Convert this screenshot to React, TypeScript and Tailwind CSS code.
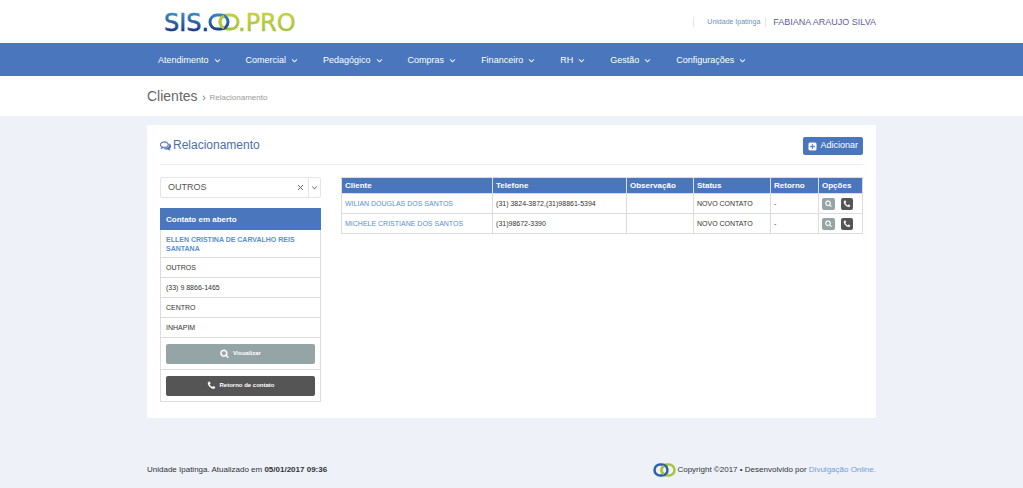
import React, { useState } from 'react';

const ICONS = {
  angleDown: 'M1395 736q0 13-10 23l-466 466q-10 10-23 10t-23-10l-466-466q-10-10-10-23t10-23l50-50q10-10 23-10t23 10l393 393 393-393q10-10 23-10t23 10l50 50q10 10 10 23z',
  phone: 'M1600 1240q0 27-10 70.5t-21 68.5q-21 50-122 106-94 51-186 51-27 0-53-3.5t-57.5-12.5-47-14.5-55.5-20.5-49-18q-98-35-175-83-127-79-264-216t-216-264q-48-77-83-175-3-9-18-49t-20.5-55.5-14.5-47-12.5-57.5-3.5-53q0-92 51-186 56-101 106-122 25-11 68.5-21t70.5-10q14 0 21 3 18 6 53 76 11 19 30 54t35 63.5 31 53.5q3 4 17.5 25t21.5 35.5 7 28.5q0 20-28.5 50t-62 55-62 53-28.5 46q0 9 5 22.5t8.5 20.5 14 24 11.5 19q76 137 174 235t235 174q2 1 19 11.5t24 14 20.5 8.5 22.5 5q18 0 46-28.5t53-62 55-62 50-28.5q14 0 28.5 7t35.5 21.5 25 17.5q25 15 53.5 31t63.5 35 54 30q70 35 76 53 3 7 3 21z',
  search: 'M1216 832q0-185-131.5-316.5t-316.5-131.5-316.5 131.5-131.5 316.5 131.5 316.5 316.5 131.5 316.5-131.5 131.5-316.5zm512 832q0 52-38 90t-90 38q-54 0-90-38l-343-342q-179 124-399 124-143 0-273.5-55.5t-225-150-150-225-55.5-273.5 55.5-273.5 150-225 225-150 273.5-55.5 273.5 55.5 225 150 150 225 55.5 273.5q0 220-124 399l343 343q37 37 37 90z',
  plusSquare: 'M1408 960v-128q0-26-19-45t-45-19h-320v-320q0-26-19-45t-45-19h-128q-26 0-45 19t-19 45v320h-320q-26 0-45 19t-19 45v128q0 26 19 45t45 19h320v320q0 26 19 45t45 19h128q26 0 45-19t19-45v-320h320q26 0 45-19t19-45zm256-544v960q0 119-84.5 203.5t-203.5 84.5h-960q-119 0-203.5-84.5t-84.5-203.5v-960q0-119 84.5-203.5t203.5-84.5h960q119 0 203.5 84.5t84.5 203.5z',
  comments: 'M704 384q-153 0-286 52t-211.5 141-78.5 191q0 82 53 158t149 132l97 56-35 84q34-20 62-39l44-31 53 10q78 14 153 14 153 0 286-52t211.5-141 78.5-191-78.5-191-211.5-141-286-52zm0-128q191 0 353.5 68.5t256.5 186.5 94 257-94 257-256.5 186.5-353.5 68.5q-86 0-176-16-124 88-278 128-36 9-86 16h-3q-11 0-20.5-8t-11.5-21q-1-3-1-6.5t.5-6.5 2-6l2.5-5 3.5-5.5 4-5 4.5-5 4-4.5q5-6 23-25t26-29.5 22.5-29 25-38.5 20.5-44q-124-72-195-177t-71-224q0-139 94-257t256.5-186.5 353.5-68.5zm822 1169q10 24 20.5 44t25 38.5 22.5 29 26 29.5 23 25q1 1 4 4.5t4.5 5 4 5 3.5 5.5l2.5 5 2 6 .5 6.5-1 6.5q-3 14-13 22t-22 7q-50-7-86-16-154-40-278-128-90 16-176 16-271 0-472-132 58 4 88 4 161 0 309-45t264-129q125-92 192-212t67-254q0-77-23-152 129 71 204 178t75 230q0 120-71 224.5t-195 176.5z'
};

const Icon: React.FC<{ name: keyof typeof ICONS; className?: string }> = ({ name, className }) => (
  <svg viewBox="0 0 1792 1792" fill="currentColor" stroke="currentColor" strokeWidth="60" className={className} aria-hidden="true">
    <path d={ICONS[name]} />
  </svg>
);

const MENU = ['Atendimento', 'Comercial', 'Pedagógico', 'Compras', 'Financeiro', 'RH', 'Gestão', 'Configurações'];

const CLIENTS = [
  { name: 'WILIAN DOUGLAS DOS SANTOS', phone: '(31) 3824-3872,(31)98861-5394', note: '', status: 'NOVO CONTATO', back: '-' },
  { name: 'MICHELE CRISTIANE DOS SANTOS', phone: '(31)98672-3390', note: '', status: 'NOVO CONTATO', back: '-' }
];

const COLUMNS = [
  { label: 'Cliente', width: 'w-[29%]' },
  { label: 'Telefone', width: '' },
  { label: 'Observação', width: 'w-[67px]' },
  { label: 'Status', width: 'w-[77px]' },
  { label: 'Retorno', width: 'w-[48px]' },
  { label: 'Opções', width: 'w-[44px]' }
];

const CONTACT = ['OUTROS', '(33) 9 8866-1465', 'CENTRO', 'INHAPIM'];

const Logo: React.FC = () => (
  <svg width="138" height="32" viewBox="0 0 138 32" role="img" aria-label="SIS.OO.PRO" className="overflow-visible">
    <defs>
      <linearGradient id="logoBlue" gradientUnits="userSpaceOnUse" x1="0" y1="7" x2="0" y2="25">
        <stop offset="0" stopColor="#3a8ac8" />
        <stop offset="1" stopColor="#1b3a86" />
      </linearGradient>
      <linearGradient id="logoGreen" gradientUnits="userSpaceOnUse" x1="0" y1="7" x2="0" y2="25">
        <stop offset="0" stopColor="#c6d145" />
        <stop offset="1" stopColor="#a5c33a" />
      </linearGradient>
    </defs>
    <g fontSize="24" fontFamily="'DejaVu Sans', sans-serif" strokeWidth="0.5">
      <text x="0" y="25" fill="url(#logoBlue)" stroke="url(#logoBlue)">SIS.</text>
      <text x="74" y="25" fill="url(#logoGreen)" stroke="url(#logoGreen)">.PRO</text>
    </g>
    <rect x="56" y="9" width="18" height="14" rx="7" fill="none" stroke="url(#logoGreen)" strokeWidth="3" />
    <rect x="46" y="9" width="18" height="14" rx="7" fill="none" stroke="url(#logoBlue)" strokeWidth="3" />
    <path d="M60 10Q56 12 56 16T60 22" fill="none" stroke="#b4c93f" strokeWidth="3" />
  </svg>
);

const Rings: React.FC = () => (
  <svg width="23" height="14" viewBox="0 0 23 14" aria-hidden="true">
    <rect x="8.500" y="1.500" width="13" height="11" rx="5.500" fill="none" stroke="#a9c63b" strokeWidth="2.500" />
    <rect x="1.500" y="1.500" width="13" height="11" rx="5.500" fill="none" stroke="#2d62ab" strokeWidth="2.500" />
    <path d="M11 3Q8.500 4.500 8.500 7T11 11" fill="none" stroke="#a9c63b" strokeWidth="2.500" />
  </svg>
);

const App: React.FC = () => {
  const [kind, setKind] = useState('OUTROS');

  return (
    <div className="min-h-screen bg-[#eef1f8] font-['Liberation_Sans',Arial,sans-serif] text-[#333333]">
      {/* Top bar */}
      <header className="bg-white">
        <div className="mx-auto flex h-[43px] w-full max-w-[729px] items-center justify-between pl-[17px]">
          <Logo />
          <div className="flex items-center leading-[10px]">
            <a href="#unidade" className="border-x border-[#e3e6ec] pl-[13px] pr-[5px] text-[7px] text-[#6a8fc8]">Unidade Ipatinga</a>
            <a href="#usuario" className="pl-[7px] text-[9px] text-[#5a6299]">FABIANA ARAUJO SILVA</a>
          </div>
        </div>
      </header>

      {/* Main menu */}
      <nav className="bg-[#4a76bd]">
        <ul className="mx-auto flex h-[33px] w-full max-w-[729px] items-center gap-6 pl-[11px] pt-[2px] text-[9px] text-white">
          {MENU.map((item) => (
            <li key={item}>
              <button type="button" className="flex items-center gap-1">
                {item}
                <Icon name="angleDown" className="size-[9px]" />
              </button>
            </li>
          ))}
        </ul>
      </nav>

      {/* Page title */}
      <div className="bg-white">
        <div className="mx-auto flex h-[40px] w-full max-w-[729px] items-center gap-[2px]">
          <h1 className="text-[14px] leading-[18px] text-[#666666]">Clientes</h1>
          <Icon name="angleDown" className="mt-1 size-[8px] -rotate-90 text-[#888888]" />
          <span className="mt-1 text-[8px] text-[#9a9a9a]">Relacionamento</span>
        </div>
      </div>

      <main className="mx-auto mt-[9px] w-full max-w-[729px] bg-white px-[13px] pb-4 pt-3">
        <div className="mb-3 flex items-start justify-between border-b border-[#eeeeee] pb-[9px]">
          <h2 className="flex items-center gap-[2px] text-[12px] leading-4 text-[#4a6fb0]">
            <Icon name="comments" className="size-[11px]" />
            Relacionamento
          </h2>
          <button type="button" className="flex h-[18px] items-center gap-[3px] rounded-[2px] bg-[#4a76bd] px-[5px] text-[9px] text-white">
            <Icon name="plusSquare" className="size-[9px]" />
            Adicionar
          </button>
        </div>

        <div className="flex items-start gap-5">
          {/* Contact still open */}
          <section className="w-[161px] shrink-0">
            <div className="mb-[10px] flex h-[21px] items-center rounded-[2px] border border-[#e5e5e5] text-[#666666]">
              <select
                aria-label="Tipo de contato"
                value={kind}
                onChange={(e) => setKind(e.target.value)}
                className="min-w-0 flex-1 appearance-none bg-transparent pl-[7px] text-[9px] text-[#555555] outline-none"
              >
                <option value=""></option>
                <option>OUTROS</option>
              </select>
              <button type="button" aria-label="Limpar" onClick={() => setKind('')} className="px-1">
                <svg viewBox="0 0 7 7" className="size-[7px]" stroke="currentColor" fill="none">
                  <path d="M1 1L6 6M6 1L1 6" />
                </svg>
              </button>
              <span className="flex h-full items-center border-l border-[#e5e5e5] px-px">
                <Icon name="angleDown" className="size-[9px] text-[#888888]" />
              </span>
            </div>

            <table className="w-full border-collapse text-left text-[7px] leading-[9px]">
              <thead>
                <tr className="h-[21px] bg-[#4a76bd] text-[8px] text-white">
                  <th className="border border-[#4a76bd] px-[5px]">Contato em aberto</th>
                </tr>
              </thead>
              <tbody>
                <tr className="h-[28px]">
                  <td className="border border-[#dddddd] px-[5px]">
                    <a href="#contato" className="font-bold text-[#5b8fce]">ELLEN CRISTINA DE CARVALHO REIS SANTANA</a>
                  </td>
                </tr>
                {CONTACT.map((line) => (
                  <tr key={line} className="h-5">
                    <td className="border border-[#dddddd] px-[5px]">{line}</td>
                  </tr>
                ))}
                <tr className="h-8">
                  <td className="border border-[#dddddd] px-[5px]">
                    <button type="button" className="flex h-5 w-full items-center justify-center gap-1 rounded-[2px] bg-[#95a5a6] text-[6px] font-bold text-white">
                      <Icon name="search" className="size-[9px]" />
                      Visualizar
                    </button>
                  </td>
                </tr>
                <tr className="h-8">
                  <td className="border border-[#dddddd] px-[5px]">
                    <button type="button" className="flex h-5 w-full items-center justify-center gap-1 rounded-[2px] bg-[#555555] text-[6px] font-bold text-white">
                      <Icon name="phone" className="size-[9px]" />
                      Retorno de contato
                    </button>
                  </td>
                </tr>
              </tbody>
            </table>
          </section>

          {/* Client list */}
          <table className="min-w-0 flex-1 table-fixed border-collapse text-left text-[7px] leading-[9px]">
            <thead>
              <tr className="h-4 bg-[#4a76bd] text-[8px] text-white">
                {COLUMNS.map((col) => (
                  <th key={col.label} className={`border border-[#dddddd] px-[3px] ${col.width}`}>{col.label}</th>
                ))}
              </tr>
            </thead>
            <tbody>
              {CLIENTS.map((client) => (
                <tr key={client.name} className="h-5">
                  <td className="border border-[#dddddd] px-[3px]">
                    <a href="#cliente" className="text-[#5b8fce]">{client.name}</a>
                  </td>
                  <td className="border border-[#dddddd] px-[3px]">{client.phone}</td>
                  <td className="border border-[#dddddd] px-[3px]">{client.note}</td>
                  <td className="border border-[#dddddd] px-[3px]">{client.status}</td>
                  <td className="border border-[#dddddd] px-[3px]">{client.back}</td>
                  <td className="border border-[#dddddd] px-[3px]">
                    <div className="flex gap-[6px] text-white">
                      <button type="button" aria-label="Visualizar" className="flex h-3 w-[13px] items-center justify-center rounded-[2px] bg-[#95a5a6]">
                        <Icon name="search" className="size-[7px]" />
                      </button>
                      <button type="button" aria-label="Retorno de contato" className="flex h-3 w-3 items-center justify-center rounded-[2px] bg-[#555555]">
                        <Icon name="phone" className="size-[8px]" />
                      </button>
                    </div>
                  </td>
                </tr>
              ))}
            </tbody>
          </table>
        </div>
      </main>

      <footer className="mx-auto mt-[45px] flex w-full max-w-[729px] items-center justify-between text-[8px]">
        <p>Unidade Ipatinga. Atualizado em <strong>05/01/2017 09:36</strong></p>
        <p className="flex items-center gap-px">
          <Rings />
          <span>Copyright ©2017 • Desenvolvido por <a href="#divulgacao" className="text-[#6f9fd8]">Divulgação Online.</a></span>
        </p>
      </footer>
    </div>
  );
};

export default App;
